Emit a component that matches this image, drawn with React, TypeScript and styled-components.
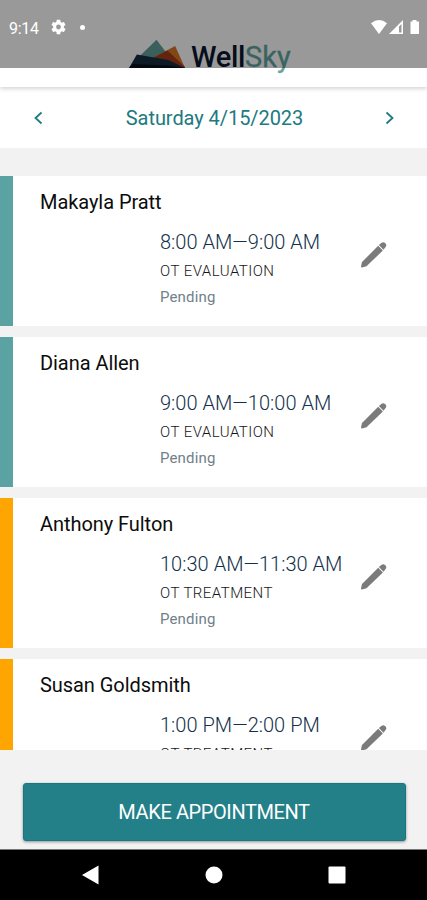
import React from "react";
import styled, { createGlobalStyle } from "styled-components";

const GlobalStyle = createGlobalStyle`
  * { box-sizing: border-box; }
  body { margin: 0; background: #f2f2f2; font-family: Roboto, "Liberation Sans", sans-serif; }
`;

const Screen = styled.div`
  width: 427px;
  height: 900px;
  display: flex;
  flex-direction: column;
  overflow: hidden;
  background: #f2f2f2;
`;

const Header = styled.header`
  position: relative;
  z-index: 1;
  flex: none;
  height: 87px;
  padding: 39px 0 0 129px;
  display: flex;
  align-items: flex-start;
  background: #fff;
  box-shadow: 0 2px 4px rgba(0, 0, 0, 0.16);
`;

const Wordmark = styled.div`
  margin: 2px 0 0 6px;
  font: 500 29px/32px Roboto, sans-serif;
  letter-spacing: -0.35px;
  color: #0b1730;
`;

const WordmarkAccent = styled.span`
  font-weight: 400;
  letter-spacing: 0;
  color: #5fa6a2;
  -webkit-text-stroke: 0.3px #5fa6a2;
`;

const StatusBar = styled.div`
  position: absolute;
  inset: 0 0 auto 0;
  height: 67.5px;
  padding: 19px 7px 0 9px;
  display: flex;
  align-items: flex-start;
  background: rgba(0, 0, 0, 0.4);
  color: #fff;
`;

const Clock = styled.span`
  width: 42px;
  margin-top: 1px;
  font-size: 16px;
  line-height: 18px;
  letter-spacing: -0.3px;
`;

const StatusDot = styled.i`
  width: 5px;
  height: 5px;
  margin: 6px auto 0 14px;
  border-radius: 50%;
  background: #fff;
`;

const DateBar = styled.nav`
  flex: none;
  height: 61px;
  padding: 0 29px 0 30px;
  display: flex;
  align-items: center;
  justify-content: space-between;
  background: #fff;
  color: #207a80;
`;

const DateLabel = styled.h1`
  margin: 0 0 0 1px;
  font: 400 20px/24px Roboto, sans-serif;
  letter-spacing: -0.06px;
`;

const IconButton = styled.button`
  display: flex;
  padding: 0;
  border: 0;
  background: none;
  color: inherit;
`;

const Schedule = styled.main`
  flex: none;
  height: 574px;
  margin-top: 27.6px;
  display: flex;
  flex-direction: column;
  gap: 11px;
  overflow: hidden;
`;

const Card = styled.article<{ $accent: string }>`
  flex: none;
  height: 150px;
  padding: 13px 39px 0 27px;
  border-left: 13px solid ${(p) => p.$accent};
  background: #fff;
`;

const Patient = styled.h2`
  margin: 0;
  font: 400 20px/26px Roboto, sans-serif;
  letter-spacing: -0.06px;
  color: #0c0c0c;
`;

const Details = styled.div`
  display: flex;
  justify-content: space-between;
  padding: 14px 0 0 120px;
`;

const Lines = styled.div`
  display: flex;
  flex-direction: column;
  white-space: nowrap;
`;

const Time = styled.span`
  font: 300 20px/26px Roboto, sans-serif;
  letter-spacing: 0.03px;
  color: #123049;
`;

const Service = styled.span`
  margin-top: 6px;
  font: 300 15px/20px Roboto, sans-serif;
  letter-spacing: 0.47px;
  color: #151515;
`;

const State = styled.span`
  margin-top: 6px;
  font: 400 15px/20px Roboto, sans-serif;
  letter-spacing: 0.15px;
  color: #71808a;
`;

const EditButton = styled(IconButton)`
  margin-top: 12.5px;
  height: 27px;
  color: #7b7b7b;
`;

const Footer = styled.footer`
  flex: none;
  height: 99px;
  padding: 33px 21.5px 0 22.5px;
`;

const PrimaryButton = styled.button`
  display: block;
  width: 100%;
  height: 58px;
  padding: 0;
  border: 1px solid #177880;
  border-radius: 3px;
  background: #238088;
  box-shadow: 0 1px 3px rgba(0, 0, 0, 0.4);
  color: #fff;
  font: 400 20px/24px Roboto, sans-serif;
  letter-spacing: -0.4px;
`;

const SystemNav = styled.div`
  flex: 1;
  border-top: 1px solid #777;
  display: grid;
  grid-template-columns: repeat(3, 123px);
  justify-content: center;
  justify-items: center;
  padding-top: 14px;
  background: #000;
`;

const Logo = () => (
  <svg width="56" height="29" viewBox="0 0 57 29" preserveAspectRatio="none">
    <path d="M10 18 28 .8 50 29H0Z" fill="#629f9a" />
    <path d="M22 20 47 7 57 29H20Z" fill="#d87725" />
    <path d="M22 20 39 11.5 57 28V29H22Z" fill="#a53c1a" />
    <path d="M0 29 8 15.5 40 21 57 29Z" fill="#172d40" />
    <path d="M0 29 4 25 40 26.5 57 29Z" fill="#08101c" />
  </svg>
);

const Gear = () => (
  <svg width="15" height="16" viewBox="2 2 20 20" fill="currentColor">
    <path d="M19.14 12.94c.04-.3.06-.61.06-.94s-.02-.64-.07-.94l2.03-1.58a.49.49 0 0 0 .12-.61l-1.92-3.32a.49.49 0 0 0-.59-.22l-2.39.96a7 7 0 0 0-1.62-.94l-.36-2.54A.48.48 0 0 0 13.92 2.4h-3.84a.48.48 0 0 0-.48.41l-.36 2.54c-.59.24-1.13.57-1.62.94l-2.39-.96a.48.48 0 0 0-.59.22L2.74 8.87a.48.48 0 0 0 .12.61l2.03 1.58a7.6 7.6 0 0 0 0 1.88l-2.03 1.58a.49.49 0 0 0-.12.61l1.92 3.32c.12.22.37.29.59.22l2.39-.96c.5.38 1.03.7 1.62.94l.36 2.54c.05.24.24.41.48.41h3.84c.24 0 .44-.17.47-.41l.36-2.54c.59-.24 1.13-.56 1.62-.94l2.39.96c.22.08.47 0 .59-.22l1.92-3.32a.48.48 0 0 0-.12-.61ZM12 15.2a3.2 3.2 0 1 1 0-6.4 3.2 3.2 0 0 1 0 6.4Z" />
  </svg>
);

const Signals = () => (
  <svg width="50" height="16" viewBox="0 0 50 16" fill="#fff">
    <path d="M1 4.2Q9 -2.2 17 4.2L9 15Z" />
    <path fillRule="evenodd" d="M19 15 33 1V15ZM29 7.5V13.5H31.5V5Z" />
    <path d="M40.5 2.5H42.5V1H46.5V2.5H49V15H40.5Z" />
  </svg>
);

const Chevron = ({ d }: { d: string }) => (
  <svg width="17" height="16" viewBox="0 0 17 16" fill="none" stroke="currentColor" strokeWidth="1.8">
    <path d={d} />
  </svg>
);

const Pencil = () => (
  <svg width="28" height="27" viewBox="0 0 28 27" fill="currentColor">
    <path d="M2 21 18.2 4.8 22.9 9.5 6.5 25.2 2 26.5Q1 26.5 1 25.4Z" />
    <path d="M18.9 4.1 21.3 1.9Q23.3 .4 25 1.9L25.8 2.8Q27.1 4.5 25.6 6L23.5 8.7Z" />
  </svg>
);

const TEAL = "#5ba2a2";
const ORANGE = "#ffa500";

const appointments = [
  { patient: "Makayla Pratt", time: "8:00 AM—9:00 AM", service: "OT EVALUATION", accent: TEAL },
  { patient: "Diana Allen", time: "9:00 AM—10:00 AM", service: "OT EVALUATION", accent: TEAL },
  { patient: "Anthony Fulton", time: "10:30 AM—11:30 AM", service: "OT TREATMENT", accent: ORANGE },
  { patient: "Susan Goldsmith", time: "1:00 PM—2:00 PM", service: "OT TREATMENT", accent: ORANGE },
];

export default function App() {
  return (
    <Screen>
      <GlobalStyle />
      <Header>
        <Logo />
        <Wordmark>Well<WordmarkAccent>Sky</WordmarkAccent></Wordmark>
        <StatusBar>
          <Clock>9:14</Clock>
          <Gear />
          <StatusDot />
          <Signals />
        </StatusBar>
      </Header>
      <DateBar>
        <IconButton aria-label="Previous day"><Chevron d="M11.5 2.5 5.5 8l6 5.5" /></IconButton>
        <DateLabel>Saturday 4/15/2023</DateLabel>
        <IconButton aria-label="Next day"><Chevron d="M5.5 2.5 11.5 8l-6 5.5" /></IconButton>
      </DateBar>
      <Schedule>
        {appointments.map((a) => (
          <Card key={a.patient} $accent={a.accent}>
            <Patient>{a.patient}</Patient>
            <Details>
              <Lines>
                <Time>{a.time}</Time>
                <Service>{a.service}</Service>
                <State>Pending</State>
              </Lines>
              <EditButton aria-label="Edit appointment"><Pencil /></EditButton>
            </Details>
          </Card>
        ))}
      </Schedule>
      <Footer>
        <PrimaryButton>MAKE APPOINTMENT</PrimaryButton>
      </Footer>
      <SystemNav>
        <svg width="18" height="22" viewBox="0 0 18 22" fill="#fff"><path d="M0 11 16.5 1.5V20.5Z" /></svg>
        <svg width="18" height="22" viewBox="0 0 18 22" fill="#fff"><circle cx="9" cy="11" r="8.5" /></svg>
        <svg width="18" height="22" viewBox="0 0 18 22" fill="#fff"><rect x=".5" y="2.5" width="17" height="17" rx="1" /></svg>
      </SystemNav>
    </Screen>
  );
}
